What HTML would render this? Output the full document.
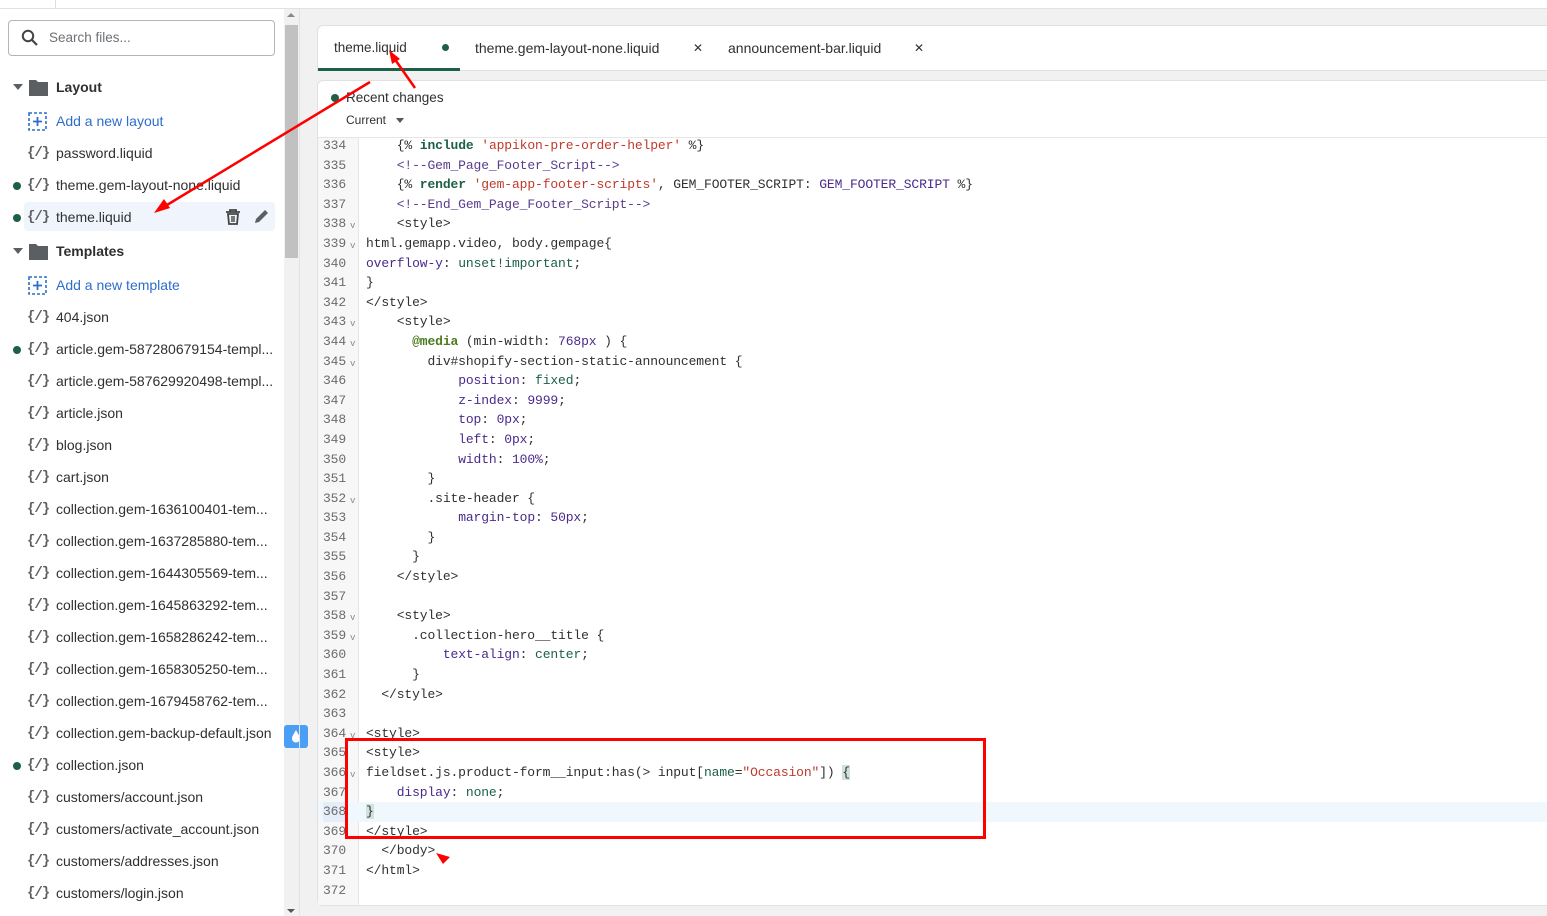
<!DOCTYPE html>
<html><head><meta charset="utf-8"><style>
*{margin:0;padding:0;box-sizing:border-box}
body{width:1547px;height:916px;overflow:hidden;background:#f1f1f1;font-family:"Liberation Sans",sans-serif;position:relative}
.top{position:absolute;left:0;top:0;width:1547px;height:9px;background:#fff;border-bottom:1px solid #e1e1e1}
.side{position:absolute;left:0;top:9px;width:284px;height:907px;background:#fff}
.search{position:absolute;left:8px;top:11px;width:267px;height:36px;border:1px solid #b5b5b5;border-radius:4px;font-size:13.5px;color:#6d7175}
.row{position:absolute;left:0;height:28px;width:284px;font-size:14px;color:#303030;line-height:30px}
.row .ic{position:absolute;left:27px;font-family:"Liberation Mono",monospace;font-size:14px;color:#5c5f62;font-weight:bold;letter-spacing:-1px}
.row .t{position:absolute;left:56px}
.dot{position:absolute;left:13px;top:12px;width:8px;height:8px;border-radius:50%;background:#1d6046}
.folder .t{font-weight:bold;color:#303030}
.add .t{color:#2c6ecb}
.sb{position:absolute;left:284px;top:9px;width:15px;height:907px;background:#f1f1f1}
.thumb{position:absolute;left:285px;top:25px;width:13px;height:233px;background:#c1c1c1}
.tabs{position:absolute;left:317px;top:25px;width:1230px;height:46px;background:#fff;border:1px solid #e1e1e1;border-right:none;border-radius:6px 0 0 0}
.tab{position:absolute;top:14px;font-size:13.5px;color:#303030}
.editor{position:absolute;left:317px;top:80px;width:1230px;height:826px;background:#fff;border:1px solid #e1e1e1;border-right:none;border-radius:6px 0 0 6px}
.gut{position:absolute;left:318px;top:138px;width:41px;height:767px;background:#f7f7f7;border-right:1px solid #e6e6e6}
.code{position:absolute;left:318px;top:136px;font-family:"Liberation Mono",monospace;font-size:13px;letter-spacing:-0.12px}
.l{height:19.6px;line-height:19.6px;white-space:pre;position:relative;width:1229px}
.n{position:absolute;left:5px;color:#6b6b6b}
.f{position:absolute;left:32px;top:3px;font-size:9px;color:#888}
.c{position:absolute;left:48px;color:#303030}
.k{color:#1d6046;font-weight:bold}.s{color:#c0392b}.p{color:#4a2a8a}.g{color:#1d6046}.cm{color:#5a3d8a}
</style></head><body>
<div class="top"></div>
<div style="position:absolute;left:55px;top:0;width:1px;height:9px;background:#ddd"></div>
<div class="side">
<div class="search"><svg style="position:absolute;left:12px;top:8px" width="18" height="18" viewBox="0 0 18 18"><circle cx="7" cy="7" r="5.2" fill="none" stroke="#444" stroke-width="2"/><path d="M11 11l5 5" stroke="#444" stroke-width="2.2"/></svg><span style="position:absolute;left:40px;top:9px">Search files...</span></div>
</div>
<div class="row folder" style="top:72px"><span style="position:absolute;left:13px;top:12px;border:5px solid transparent;border-top:6px solid #5c5f62;border-bottom:0"></span><svg style="position:absolute;left:29px;top:7px" width="19" height="17"><path d="M0 1h7l2 2h10v14H0z" fill="#5c5f62"/></svg><span class="t">Layout</span></div>
<div class="row add" style="top:106px"><svg style="position:absolute;left:28px;top:6px" width="19" height="19"><rect x="1" y="1" width="17" height="17" fill="none" stroke="#2c6ecb" stroke-width="1.6" stroke-dasharray="3 2"/><path d="M9.5 5v9M5 9.5h9" stroke="#2c6ecb" stroke-width="1.8"/></svg><span class="t">Add a new layout</span></div>
<div class="row" style="top:138px"><span class="ic">{/}</span><span class="t">password.liquid</span></div>
<div class="row" style="top:170px"><span class="dot"></span><span class="ic">{/}</span><span class="t">theme.gem-layout-none.liquid</span></div>
<div class="row" style="top:202px;left:24px;width:251px;background:#f0f5fd;border-radius:4px;height:29px"></div>
<div class="row" style="top:202px"><span class="dot"></span><span class="ic">{/}</span><span class="t">theme.liquid</span>
<svg style="position:absolute;left:225px;top:7px" width="16" height="16"><path d="M1 3h14M5 3V1h6v2M3 5h10l-1 10H4z" fill="none" stroke="#444" stroke-width="1.8"/><path d="M7 7v6M9 7v6" stroke="#444" stroke-width="1.4"/></svg>
<svg style="position:absolute;left:253px;top:6px" width="17" height="17"><path d="M2 15l1-4 9-9 3 3-9 9z" fill="#5c5f62"/></svg></div>
<div class="row folder" style="top:236px"><span style="position:absolute;left:13px;top:12px;border:5px solid transparent;border-top:6px solid #5c5f62;border-bottom:0"></span><svg style="position:absolute;left:29px;top:7px" width="19" height="17"><path d="M0 1h7l2 2h10v14H0z" fill="#5c5f62"/></svg><span class="t">Templates</span></div>
<div class="row add" style="top:270px"><svg style="position:absolute;left:28px;top:6px" width="19" height="19"><rect x="1" y="1" width="17" height="17" fill="none" stroke="#2c6ecb" stroke-width="1.6" stroke-dasharray="3 2"/><path d="M9.5 5v9M5 9.5h9" stroke="#2c6ecb" stroke-width="1.8"/></svg><span class="t">Add a new template</span></div>
<div class="row" style="top:302px"><span class="ic">{/}</span><span class="t">404.json</span></div>
<div class="row" style="top:334px"><span class="dot"></span><span class="ic">{/}</span><span class="t">article.gem-587280679154-templ...</span></div>
<div class="row" style="top:366px"><span class="ic">{/}</span><span class="t">article.gem-587629920498-templ...</span></div>
<div class="row" style="top:398px"><span class="ic">{/}</span><span class="t">article.json</span></div>
<div class="row" style="top:430px"><span class="ic">{/}</span><span class="t">blog.json</span></div>
<div class="row" style="top:462px"><span class="ic">{/}</span><span class="t">cart.json</span></div>
<div class="row" style="top:494px"><span class="ic">{/}</span><span class="t">collection.gem-1636100401-tem...</span></div>
<div class="row" style="top:526px"><span class="ic">{/}</span><span class="t">collection.gem-1637285880-tem...</span></div>
<div class="row" style="top:558px"><span class="ic">{/}</span><span class="t">collection.gem-1644305569-tem...</span></div>
<div class="row" style="top:590px"><span class="ic">{/}</span><span class="t">collection.gem-1645863292-tem...</span></div>
<div class="row" style="top:622px"><span class="ic">{/}</span><span class="t">collection.gem-1658286242-tem...</span></div>
<div class="row" style="top:654px"><span class="ic">{/}</span><span class="t">collection.gem-1658305250-tem...</span></div>
<div class="row" style="top:686px"><span class="ic">{/}</span><span class="t">collection.gem-1679458762-tem...</span></div>
<div class="row" style="top:718px"><span class="ic">{/}</span><span class="t">collection.gem-backup-default.json</span></div>
<div class="row" style="top:750px"><span class="dot"></span><span class="ic">{/}</span><span class="t">collection.json</span></div>
<div class="row" style="top:782px"><span class="ic">{/}</span><span class="t">customers/account.json</span></div>
<div class="row" style="top:814px"><span class="ic">{/}</span><span class="t">customers/activate_account.json</span></div>
<div class="row" style="top:846px"><span class="ic">{/}</span><span class="t">customers/addresses.json</span></div>
<div class="row" style="top:878px"><span class="ic">{/}</span><span class="t">customers/login.json</span></div>
<div class="sb"></div><div class="thumb"></div>
<div style="position:absolute;left:287px;top:13px;border:4px solid transparent;border-bottom:4px solid #888;border-top:0"></div>
<div style="position:absolute;left:287px;top:909px;border:4px solid transparent;border-top:4px solid #555;border-bottom:0"></div>
<div style="position:absolute;left:284px;top:725px;width:24px;height:23px;background:#4a9ff5;border-radius:3px"><svg width="24" height="23"><path d="M12 5c-2 4-4 6-4 8.5a4 4 0 008 0C16 11 14 9 12 5z" fill="#fff"/></svg></div>
<div style="position:absolute;left:299px;top:9px;width:1px;height:907px;background:#e3e3e3"></div>
<div class="tabs">
<span class="tab" style="left:16px">theme.liquid</span><span style="position:absolute;left:124px;top:18px;width:7px;height:7px;border-radius:50%;background:#1d6046"></span>
<span class="tab" style="left:157px;font-size:14px">theme.gem-layout-none.liquid</span><span class="tab" style="left:375px;font-size:12px;top:15px">✕</span>
<span class="tab" style="left:410px;font-size:14px">announcement-bar.liquid</span><span class="tab" style="left:596px;font-size:12px;top:15px">✕</span>
<div style="position:absolute;left:0;top:42px;width:142px;height:3px;background:#1d6046"></div>
</div>
<div class="editor">
<span style="position:absolute;left:13px;top:13px;width:8px;height:8px;border-radius:50%;background:#1d6046"></span>
<span style="position:absolute;left:28px;top:9px;font-size:13.5px;color:#303030">Recent changes</span>
<span style="position:absolute;left:28px;top:32px;font-size:12px;color:#303030">Current</span>
<span style="position:absolute;left:78px;top:37px;border:4px solid transparent;border-top:5px solid #555;border-bottom:0"></span>
<div style="position:absolute;left:0;top:56px;width:1230px;height:1px;background:#e6e6e6"></div>
</div>
<div class="gut"></div>
<div class="code">
<div class="l"><span class="n">334</span><span class="c">    <span>{%</span> <span class="k">include</span> <span class="s">'appikon-pre-order-helper'</span> <span>%}</span></span></div>
<div class="l"><span class="n">335</span><span class="c">    <span class="cm">&lt;!--Gem_Page_Footer_Script--&gt;</span></span></div>
<div class="l"><span class="n">336</span><span class="c">    {% <span class="k">render</span> <span class="s">'gem-app-footer-scripts'</span>, GEM_FOOTER_SCRIPT: <span class="p">GEM_FOOTER_SCRIPT</span> %}</span></div>
<div class="l"><span class="n">337</span><span class="c">    <span class="cm">&lt;!--End_Gem_Page_Footer_Script--&gt;</span></span></div>
<div class="l"><span class="n">338</span><span class="f">v</span><span class="c">    &lt;style&gt;</span></div>
<div class="l"><span class="n">339</span><span class="f">v</span><span class="c">html.gemapp.video, body.gempage{</span></div>
<div class="l"><span class="n">340</span><span class="c"><span class="p">overflow-y</span>: <span class="g">unset!important</span>;</span></div>
<div class="l"><span class="n">341</span><span class="c">}</span></div>
<div class="l"><span class="n">342</span><span class="c">&lt;/style&gt;</span></div>
<div class="l"><span class="n">343</span><span class="f">v</span><span class="c">    &lt;style&gt;</span></div>
<div class="l"><span class="n">344</span><span class="f">v</span><span class="c">      <span class="k" style="color:#4d7a1f">@media</span> (min-width: <span class="p">768px</span> ) {</span></div>
<div class="l"><span class="n">345</span><span class="f">v</span><span class="c">        div#shopify-section-static-announcement {</span></div>
<div class="l"><span class="n">346</span><span class="c">            <span class="p">position</span>: <span class="g">fixed</span>;</span></div>
<div class="l"><span class="n">347</span><span class="c">            <span class="p">z-index</span>: <span class="p">9999</span>;</span></div>
<div class="l"><span class="n">348</span><span class="c">            <span class="p">top</span>: <span class="p">0px</span>;</span></div>
<div class="l"><span class="n">349</span><span class="c">            <span class="p">left</span>: <span class="p">0px</span>;</span></div>
<div class="l"><span class="n">350</span><span class="c">            <span class="p">width</span>: <span class="p">100%</span>;</span></div>
<div class="l"><span class="n">351</span><span class="c">        }</span></div>
<div class="l"><span class="n">352</span><span class="f">v</span><span class="c">        .site-header {</span></div>
<div class="l"><span class="n">353</span><span class="c">            <span class="p">margin-top</span>: <span class="p">50px</span>;</span></div>
<div class="l"><span class="n">354</span><span class="c">        }</span></div>
<div class="l"><span class="n">355</span><span class="c">      }</span></div>
<div class="l"><span class="n">356</span><span class="c">    &lt;/style&gt;</span></div>
<div class="l"><span class="n">357</span><span class="c"></span></div>
<div class="l"><span class="n">358</span><span class="f">v</span><span class="c">    &lt;style&gt;</span></div>
<div class="l"><span class="n">359</span><span class="f">v</span><span class="c">      .collection-hero__title {</span></div>
<div class="l"><span class="n">360</span><span class="c">          <span class="p">text-align</span>: <span class="g">center</span>;</span></div>
<div class="l"><span class="n">361</span><span class="c">      }</span></div>
<div class="l"><span class="n">362</span><span class="c">  &lt;/style&gt;</span></div>
<div class="l"><span class="n">363</span><span class="c"></span></div>
<div class="l"><span class="n">364</span><span class="f">v</span><span class="c">&lt;style&gt;</span></div>
<div class="l"><span class="n">365</span><span class="c">&lt;style&gt;</span></div>
<div class="l"><span class="n">366</span><span class="f">v</span><span class="c">fieldset.js.product-form__input:has(&gt; input[<span class="g">name</span>=<span class="s">"Occasion"</span>]) <span style="background:#cfe3dc">{</span></span></div>
<div class="l"><span class="n">367</span><span class="c">    <span class="p">display</span>: <span class="g">none</span>;</span></div>
<div class="l" style="background:#f0f7fd"><span class="n" style="background:#e4eef9">368</span><span class="c"><span style="background:#cfe3dc">}</span></span></div>
<div class="l"><span class="n">369</span><span class="c">&lt;/style&gt;</span></div>
<div class="l"><span class="n">370</span><span class="c">  &lt;/body&gt;</span></div>
<div class="l"><span class="n">371</span><span class="c">&lt;/html&gt;</span></div>
<div class="l"><span class="n">372</span><span class="c"></span></div>
</div>
<svg style="position:absolute;left:0;top:0" width="1547" height="916">
<rect x="346.5" y="739.5" width="638" height="98" fill="none" stroke="#f00" stroke-width="3"/>
<path d="M370 82L162 208" stroke="#f00" stroke-width="2.5"/><path d="M154 213l10-14 6 9z" fill="#f00"/>
<path d="M415 88L394 58" stroke="#f00" stroke-width="2.5"/><path d="M389 50l11 9-8 5z" fill="#f00"/>
<path d="M436 853l14 4-7 7z" fill="#f00"/>
</svg>
</body></html>
